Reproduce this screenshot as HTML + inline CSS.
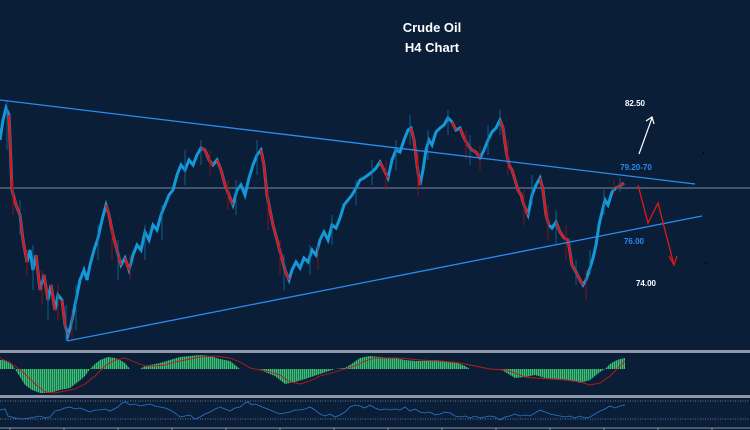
<!DOCTYPE html>
<html><head><meta charset="utf-8"><style>
html,body{margin:0;padding:0;background:#0a1e38;width:750px;height:430px;overflow:hidden}
svg{display:block}
text{font-family:"Liberation Sans",sans-serif;font-weight:bold}
</style></head><body>
<svg width="750" height="430" viewBox="0 0 750 430">
<defs>
<pattern id="st" width="2" height="10" patternUnits="userSpaceOnUse"><rect width="1.2" height="10" fill="#3cc07a"/><rect x="1.2" width="0.8" height="10" fill="#1f7a50"/></pattern>
</defs>
<rect width="750" height="430" fill="#0a1e38"/>
<line x1="0" y1="188" x2="750" y2="188" stroke="#7d8ba0" stroke-width="1"/>
<g fill="none" stroke-linejoin="miter" stroke-linecap="butt">
<polyline stroke="#1398d8" stroke-width="3" points="0,140 3,120 6,108 9,115 12,190 16,205 20,215 23,240 27,262 30,250 33,270 36,255 40,290 44,275 48,300 51,285 55,310 58,295 62,300 65,325 68,335 71,325 74,310 77,295 80,280 84,270 87,280 90,265 94,250 98,238 102,220 106,205 109,215 113,235 117,250 121,265 125,258 129,270 133,255 137,245 141,250 145,232 149,240 153,225 157,230 161,215 165,205 169,195 173,190 177,175 181,165 185,170 189,160 193,165 197,155 201,148 205,150 209,160 213,165 217,160 221,170 225,185 229,195 233,205 237,190 241,185 245,195 249,178 253,165 257,155 261,150 264,165 267,195 270,210 273,225 277,240 281,255 285,270 289,280 292,270 296,262 300,268 304,258 308,262 312,250 316,255 320,240 324,232 328,240 332,225 336,228 340,218 344,205 348,200 352,195 356,188 360,180 364,178 368,175 372,172 376,168 380,162 384,170 388,178 392,160 396,150 400,152 404,140 408,130 411,128 414,140 417,165 420,185 423,170 426,150 429,140 432,145 436,132 440,128 444,125 448,118 452,122 456,130 460,128 464,138 468,145 472,150 476,152 480,158 484,150 488,140 492,132 496,128 500,120 503,128 506,150 509,165 512,170 515,180 518,190 521,195 524,205 528,215 532,195 536,185 540,178 543,190 546,215 549,225 552,228 556,222 560,232 564,238 568,240 572,265 576,272 580,280 583,285 586,280 590,268 593,258 596,245 599,225 602,212 605,200 608,205 612,192 616,188 620,186 624,183"/>
<g stroke="#e81010" stroke-width="2.2">
<polyline points="9,115 12,190 16,205 20,215 23,240 27,262"/>
<polyline points="36,255 40,290"/><polyline points="44,275 48,300"/><polyline points="51,285 55,310"/><polyline points="62,300 65,325 68,335"/>
<polyline points="106,205 109,215 113,235 117,250 121,265"/><polyline points="125,258 129,270"/>
<polyline points="201,148 205,150 209,160 213,165"/><polyline points="217,160 221,170 225,185 229,195 233,205"/>
<polyline points="261,150 264,165 267,195 270,210 273,225 277,240 281,255 285,270 289,280"/>
<polyline points="380,162 384,170 388,178"/><polyline points="411,128 414,140 417,165 420,185"/>
<polyline points="452,122 456,130"/><polyline points="460,128 464,138 468,145 472,150 476,152 480,158"/>
<polyline points="500,120 503,128 506,150 509,165 512,170 515,180 518,190 521,195 524,205 528,215"/>
<polyline points="540,178 543,190 546,215 549,225"/><polyline points="556,222 560,232 564,238 568,240 572,265 576,272 580,280 583,285"/>
<polyline points="616,188 620,186 624,183"/>
</g>
<path stroke="#1070a0" stroke-width="0.8" d="M7 100V150M20 200V235M33 245V290M48 290V320M66 305V340M76 285V330M98 225V260M118 240V280M145 225V260M162 205V240M185 150V185M201 140V165M236 180V215M257 140V175M284 255V290M310 245V275M332 215V245M356 180V205M372 160V185M396 140V170M410 115V145M428 130V160M448 110V135M470 135V165M488 125V155M500 110V135M532 175V205M556 210V245M576 260V285M590 250V275M604 190V215M620 178V192"/>
<path stroke="#a01010" stroke-width="0.8" d="M13 180V215M27 250V275M42 270V305M58 285V320M72 310V340M112 230V260M130 255V280M210 150V175M228 180V210M268 190V230M280 240V275M318 245V270M386 160V190M418 150V195M466 130V160M480 145V170M508 140V175M524 190V225M548 205V240M566 225V260M586 270V300M614 180V195"/>
</g>
<line x1="0" y1="100" x2="695" y2="184" stroke="#2a8cf0" stroke-width="1.3"/>
<line x1="67" y1="341" x2="702" y2="216" stroke="#2a8cf0" stroke-width="1.3"/>
<line x1="67" y1="341" x2="67" y2="328" stroke="#2a8cf0" stroke-width="1"/>
<text x="432" y="32" fill="#fff" font-size="13" text-anchor="middle">Crude Oil</text>
<text x="432" y="52" fill="#fff" font-size="13" text-anchor="middle">H4 Chart</text>
<text x="635" y="106" fill="#fff" font-size="8" text-anchor="middle">82.50</text>
<text x="636" y="170" fill="#2a8cf0" font-size="8" text-anchor="middle">79.20-70</text>
<text x="634" y="244" fill="#2a8cf0" font-size="8" text-anchor="middle">76.00</text>
<text x="646" y="286" fill="#fff" font-size="8" text-anchor="middle">74.00</text>
<path d="M639 154 L652 118 M646 121 L652 117 L654 124" stroke="#fff" stroke-width="1.2" fill="none"/>
<path d="M638 185 L648 223 L658 203 L674 265 M669 256 L674 265 L677 256" stroke="#e01818" stroke-width="1.3" fill="none"/>
<rect x="703" y="152" width="1.5" height="1.5" fill="#000"/>
<rect x="705" y="262" width="1.5" height="1.5" fill="#000"/>
<rect x="0" y="350" width="750" height="3" fill="#8d97a5"/>
<rect x="0" y="395" width="750" height="3" fill="#8d97a5"/>
<path fill="url(#st)" d="M0 369V360L5 360L10 362L15 369L20 377L25 385L32 390L40 393L50 393L60 390L70 388L78 382L85 376L90 369L95 364L100 360L108 357L115 358L120 360L125 363L130 369L140 369L145 366L150 365L160 363L170 360L180 357L190 356L200 355L210 356L220 359L230 361L240 369L260 369L265 372L275 376L285 384L295 382L305 379L320 374L335 369L345 368L350 365L360 358L370 356L380 357L395 358L405 360L415 361L425 361L435 360L445 361L455 362L465 366L470 369L500 369L505 372L515 378L525 377L535 375L545 378L560 379L570 380L580 383L590 380L595 376L600 372L605 369L610 364L615 361L620 359L625 358V369Z"/>
<polyline fill="none" stroke="#c01818" stroke-width="0.9" points="0,358 8,362 15,366 25,374 35,384 45,392 55,393 65,391 75,389 85,384 95,376 105,366 115,360 125,358 135,362 145,366 155,366 165,365 175,362 185,360 200,357 215,356 230,358 240,362 250,368 260,370 270,372 280,375 290,382 300,384 310,381 320,376 335,372 345,369 355,366 365,361 375,358 385,358 400,358 420,360 440,361 460,363 475,366 490,369 505,370 515,373 525,377 535,378 550,379 565,380 580,382 590,385 600,383 610,376 620,366 625,361"/>
<line x1="0" y1="401" x2="750" y2="401" stroke="#6a7a90" stroke-dasharray="1,1.5"/>
<line x1="0" y1="419" x2="750" y2="419" stroke="#6a7a90" stroke-dasharray="1,1.5"/>
<polyline fill="none" stroke="#2a78d0" stroke-width="0.8" points="0,410 5,409 8,416 15,418 22,419 30,418 35,417 40,416 45,418 50,417 55,411 60,410 65,408 70,407 75,409 80,408 85,410 90,412 95,410 100,410 105,409 110,411 118,407 122,403 126,402 130,405 135,404 140,406 145,405 150,404 155,406 160,407 165,408 170,410 175,413 180,417 185,416 190,415 195,419 200,417 205,414 210,412 215,409 220,407 225,409 230,411 235,408 240,407 245,403 248,402 252,405 255,404 260,406 265,408 270,410 275,412 280,414 285,413 290,412 295,410 300,410 305,409 310,407 315,410 320,414 325,416 330,414 335,417 340,415 345,412 350,407 355,405 360,406 365,408 370,405 375,408 380,410 385,409 390,410 395,409 400,410 405,407 410,411 415,409 420,412 425,413 430,412 435,415 440,414 445,412 450,413 455,416 460,417 465,416 470,418 475,416 480,418 485,417 490,416 495,417 500,420 505,417 510,416 515,414 520,416 525,415 530,416 535,413 540,410 545,412 550,414 555,415 560,416 565,417 570,416 575,418 580,416 585,418 590,417 595,414 600,411 605,409 610,406 615,408 620,406 625,405"/>
<line x1="0" y1="428" x2="750" y2="428" stroke="#8d97a5" stroke-width="1"/>
<path stroke="#8d97a5" fill="none" d="M10 428V430M64 428V430M118 428V430M172 428V430M226 428V430M280 428V430M334 428V430M388 428V430M442 428V430M496 428V430M550 428V430M604 428V430M658 428V430M712 428V430"/>
</svg>
</body></html>
